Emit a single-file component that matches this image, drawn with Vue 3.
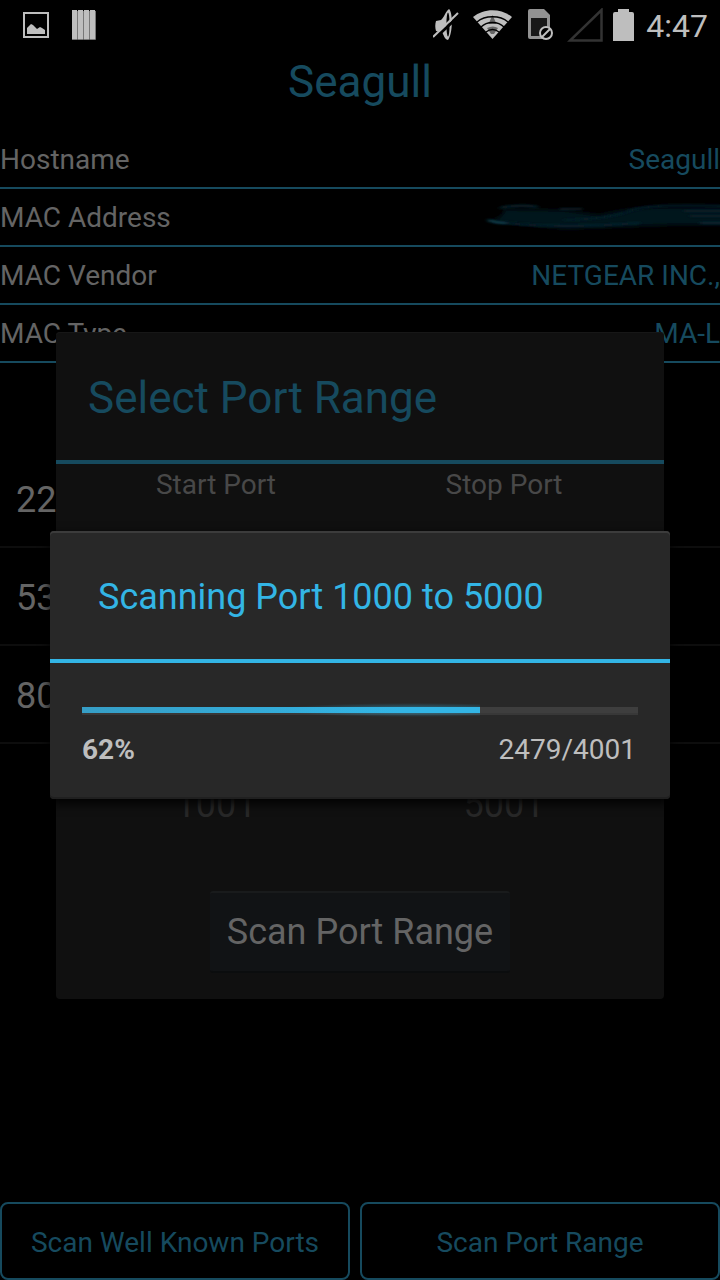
<script setup>
const details = [
  { label: 'Hostname', value: 'Seagull' },
  { label: 'MAC Address', value: '' },
  { label: 'MAC Vendor', value: 'NETGEAR INC.,' },
  { label: 'MAC Type', value: 'MA-L' },
]
const ports = [22, 53, 80]
const columns = [
  { label: 'Start Port', next: 1001 },
  { label: 'Stop Port', next: 5001 },
]
const scan = { from: 1000, to: 5000, done: 2479, total: 4001 }
const percent = Math.round((scan.done / scan.total) * 100)
const inFlight = 385
const fill = { width: (((scan.done + inFlight) / scan.total) * 100).toFixed(1) + '%' }
</script>

<template>
  <div class="screen">
    <header class="status">
      <svg class="picture" width="26" height="26" viewBox="0 0 26 26">
        <path d="M1 1h24v24H1z" fill="none" stroke="#bebebe" stroke-width="2" />
        <path d="M4 16l4-4 2 1 4 4 3-2 2 1 3 2v4H4z" fill="#bebebe" />
      </svg>
      <svg class="bars" width="24" height="30" viewBox="0 0 24 30">
        <g v-for="i in 4" :key="i">
          <path :d="`M${i * 6 - 6} 0h5v29h-5z`" fill="#bebebe" />
          <path :d="`M${i * 6 - 6} 29.5h5.5V1`" fill="none" stroke="#777" />
        </g>
      </svg>
      <span class="spring"></span>
      <svg class="mute" width="26" height="32" viewBox="0 0 26 32">
        <path d="M3 12l5-1c3-2 4-8 8-11 4 3 4 25-1 31-4-1-4-5-6-8l-6-1c-1-3-1-7 0-10z" fill="#bebebe" />
        <ellipse cx="15" cy="15.500" rx="1.600" ry="12" fill="#000" />
        <path d="M1 30L27 6" stroke="#000" stroke-width="3" />
        <path d="M0 28L25 4" stroke="#bebebe" stroke-width="2" />
      </svg>
      <svg class="wifi" width="40" height="30" viewBox="0 0 40 30">
        <path d="M0 7C11-2 28-2 39 7L19.500 29z" fill="#bebebe" />
        <path d="M19.500 5l4 9h-8zM14 18q6-3 11 0l-4 6h-3z" fill="#666" />
        <g fill="none" stroke="#000" stroke-width="1.400">
          <path d="M4 12C12 5 27 5 35 12" />
          <path d="M8 17C14 11 25 11 31 17" />
          <path d="M13 22c4-3 9-3 13 0" />
        </g>
      </svg>
      <svg class="sim" width="26" height="32" viewBox="0 0 26 32">
        <path d="M2 0h14l6 6v24H2a2 2 0 0 1-2-2V2a2 2 0 0 1 2-2z" fill="#929292" />
        <path d="M3 9h16v18H3z" fill="#181818" />
        <circle cx="18" cy="24" r="6" fill="#000" stroke="#bebebe" stroke-width="2" />
        <path d="M14 28l8-8" stroke="#bebebe" stroke-width="2" />
      </svg>
      <svg class="signal" width="36" height="34" viewBox="0 0 36 34">
        <path d="M3 32.500H34.500V2z" fill="none" stroke="#333" stroke-width="2.500" />
      </svg>
      <svg class="battery" width="21" height="32" viewBox="0 0 21 32">
        <path d="M5 0h11v3h3a2 2 0 0 1 2 2v27H0V5a2 2 0 0 1 2-2h3z" fill="#bebebe" />
      </svg>
      <time>4:47</time>
    </header>

    <main class="page">
      <h1>Seagull</h1>
      <dl class="details">
        <div v-for="d in details" :key="d.label" class="row">
          <dt>{{ d.label }}</dt>
          <dd>
            <template v-if="d.value">{{ d.value }}</template>
            <svg v-else class="smudge" width="236" height="32" viewBox="0 0 236 32">
              <defs>
                <filter id="soft" x="-10%" y="-50%" width="120%" height="200%"><feGaussianBlur stdDeviation="2" /></filter>
                <filter id="fine" x="-10%" y="-200%" width="120%" height="500%"><feGaussianBlur stdDeviation="2 1" /></filter>
              </defs>
              <path d="M4 18Q20 15 20 6L80 7 115 12Q150 3 180 4H240V22L190 22 80 26Z" fill="#05161e" filter="url(#soft)" />
              <g fill="none" stroke="#0b2833" stroke-width="2" filter="url(#fine)">
                <path d="M4 17Q12 20 22 20" stroke="#134d5e" />
                <path d="M16 5Q34 1 54 4" />
                <path d="M76 6H98" stroke="#08202a" />
                <path d="M22 20Q80 26 156 20" stroke="#09232d" />
                <path d="M80 17Q125 16 145 8T240 3" stroke="#071d27" />
                <path d="M200 8H240M206 13H240" stroke="#071d27" />
                <path d="M216 20H240" />
              </g>
            </svg>
          </dd>
        </div>
      </dl>
      <ul class="ports">
        <li v-for="p in ports" :key="p">{{ p }}</li>
      </ul>
      <nav class="actions">
        <button type="button">Scan Well Known Ports</button>
        <button type="button">Scan Port Range</button>
      </nav>
    </main>

    <div class="layer">
      <section class="dialog range" role="dialog" aria-labelledby="range-title">
        <h2 id="range-title">Select Port Range</h2>
        <div class="pickers">
          <div v-for="c in columns" :key="c.label" class="picker">
            <span>{{ c.label }}</span>
            <button type="button">{{ c.next }}</button>
          </div>
        </div>
        <button type="button" class="start">Scan Port Range</button>
      </section>
    </div>

    <div class="layer">
      <section class="dialog progress" role="dialog" aria-labelledby="scan-title">
        <h2 id="scan-title">Scanning Port {{ scan.from }} to {{ scan.to }}</h2>
        <div class="body">
          <div class="track" role="progressbar" aria-labelledby="scan-title" :aria-valuenow="percent" aria-valuemin="0" aria-valuemax="100">
            <div class="fill" :style="fill"></div>
          </div>
          <div class="counts">
            <strong>{{ percent }}%</strong>
            <span>{{ scan.done }}/{{ scan.total }}</span>
          </div>
        </div>
      </section>
    </div>
  </div>
</template>

<style>
body {
  background: #000;
}
</style>

<style scoped>
.screen {
  position: relative;
  display: flex;
  flex-direction: column;
  min-height: 100vh;
  overflow: hidden;
  background: #000;
  color: #646464;
  font-family: Roboto, "Liberation Sans", sans-serif;
  font-size: 28px;
  line-height: 32px;
}
h1, h2, dl, dd, ul {
  margin: 0;
  padding: 0;
  font-weight: 400;
}
button {
  margin: 0;
  padding: 0;
  border: 0;
  background: none;
  color: inherit;
  font: inherit;
}
.status {
  display: flex;
  align-items: center;
  height: 50px;
  padding: 0 12px 0 23px;
  color: #bebebe;
}
.status svg {
  flex: none;
}
.status time {
  padding-top: 2px;
  font-size: 32px;
}
.bars {
  margin-left: 23px;
}
.spring {
  flex: 1;
}
.wifi {
  margin-left: 14px;
}
.sim {
  margin-left: 15px;
}
.signal {
  margin-left: 13px;
}
.battery {
  margin: 0 12px 0 10px;
}
.page {
  display: flex;
  flex: 1;
  flex-direction: column;
}
h1 {
  height: 81px;
  color: #164a5e;
  font-size: 44px;
  line-height: 64px;
  text-align: center;
}
.row {
  display: flex;
  justify-content: space-between;
  height: 56px;
  border-bottom: 2px solid #164a5e;
  line-height: 58px;
}
dd {
  color: #164a5e;
}
.smudge {
  display: block;
  margin-top: 14px;
}
.ports {
  flex: 1;
  padding-top: 87px;
  list-style: none;
}
.ports li {
  height: 96px;
  padding-left: 16px;
  border-bottom: 2px solid #0d0d0d;
  font-size: 36px;
  line-height: 100px;
}
.actions {
  display: grid;
  grid-template-columns: 35fr 36fr;
  gap: 10px;
}
.actions button {
  height: 78px;
  padding-top: 4px;
  border: 2px solid #164a5e;
  border-radius: 8px;
  color: #164a5e;
}
.layer {
  position: absolute;
  inset: 50px 0 0;
  display: flex;
  align-items: center;
}
.dialog {
  flex: 1;
  border-radius: 4px;
}
.dialog h2 {
  height: 128px;
  border-bottom: 4px solid;
}
.range {
  display: flex;
  flex-direction: column;
  margin: 0 56px;
  padding-bottom: 26px;
  background: #101010;
  box-shadow: inset 0 1px #171717;
}
.range h2 {
  padding: 0 32px;
  border-color: #164a5e;
  color: #164a5e;
  font-size: 44px;
  line-height: 132px;
}
.pickers {
  display: grid;
  grid-template-columns: 1fr 1fr;
  padding: 5px 16px 0;
}
.picker {
  display: flex;
  flex-direction: column;
  align-items: center;
  justify-content: space-between;
  height: 358px;
  color: #484848;
}
.picker button {
  color: #282828;
  font-size: 36px;
  line-height: 44px;
}
.start {
  align-self: center;
  height: 82px;
  margin-top: 64px;
  padding: 0 17px;
  border-top: 2px solid #191b1c;
  border-bottom: 2px solid #0b0d0e;
  border-radius: 3px;
  background: #111315;
  color: #646464;
  font-size: 36px;
}
.progress {
  margin: 0 50px;
  background: #282828;
  box-shadow: inset 0 2px #3c3c3c, inset 0 -2px #202020, 0 4px 12px #000;
}
.progress h2 {
  padding: 0 48px;
  border-color: #33b5e5;
  color: #33b5e5;
  font-size: 36px;
  line-height: 132px;
}
.body {
  padding: 44px 32px 33px;
}
.track {
  height: 8px;
  background: linear-gradient(#3e3e3e 75%, #383838 75%);
}
.fill {
  position: relative;
  height: 6px;
  background: linear-gradient(90deg, #369ec6, #33b5e5 80%);
}
.fill::after {
  content: "";
  position: absolute;
  inset: -4px 0 -4px 30%;
  background: radial-gradient(ellipse 50% 50% at 76% 50%, #33b5e5 30%, #33b5e500);
  opacity: 0.4;
}
.counts {
  display: flex;
  justify-content: space-between;
  padding: 19px 2px 0 0;
  color: #bebebe;
}
</style>
